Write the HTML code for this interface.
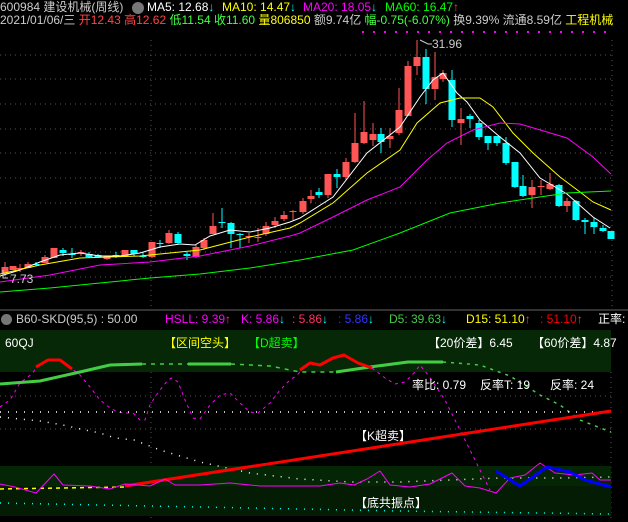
<!DOCTYPE html>
<html><head><meta charset="utf-8"><style>
html,body{margin:0;padding:0;background:#000;width:628px;height:522px;overflow:hidden}
svg{position:absolute;left:0;top:0}
.t{position:absolute;font-family:"Liberation Sans","Noto Sans CJK SC",sans-serif;font-size:12px;white-space:nowrap;line-height:14px}
</style></head><body>
<svg id="s" width="628" height="522" xmlns="http://www.w3.org/2000/svg">
<g stroke="#555" stroke-width="1" stroke-dasharray="1,4">
<line x1="0" y1="55" x2="612" y2="55"/><line x1="0" y1="79" x2="612" y2="79"/><line x1="0" y1="104" x2="612" y2="104"/><line x1="0" y1="129" x2="612" y2="129"/><line x1="0" y1="153" x2="612" y2="153"/><line x1="0" y1="178" x2="612" y2="178"/><line x1="0" y1="203" x2="612" y2="203"/><line x1="0" y1="227" x2="612" y2="227"/><line x1="0" y1="252" x2="612" y2="252"/><line x1="0" y1="277" x2="612" y2="277"/>
<line x1="151" y1="40" x2="151" y2="308"/><line x1="612" y1="40" x2="612" y2="308"/>
<line x1="0" y1="396" x2="612" y2="396"/><line x1="0" y1="429" x2="612" y2="429"/>
<line x1="151" y1="372" x2="151" y2="522"/><line x1="611" y1="372" x2="611" y2="522"/>
</g>
<line x1="0" y1="310" x2="628" y2="310" stroke="#666" stroke-width="1"/>
<line x1="362" y1="32" x2="612" y2="32" stroke="#f0f" stroke-width="2" stroke-dasharray="2,9"/>
<g id="c"></g>
<polyline fill="none" stroke="#fff" stroke-width="1" points="0,276 20,270 40,262 60,255 80,253 100,256 120,256 140,253 160,247 180,244 195,245 210,236 230,230 250,232 270,228 290,222 300,218 333,197 367,153 400,127 420,97 433,80 443,73 457,93 467,102 480,120 500,137 520,153 540,178 567,194 593,217 610,228"/>
<polyline fill="none" stroke="#ff0" stroke-width="1" points="0,274 40,265 80,258 140,256 200,250 250,237 290,228 300,223 333,203 367,173 400,150 417,123 440,103 460,98 480,98 493,107 513,133 533,153 560,177 580,192 593,202 611,210"/>
<polyline fill="none" stroke="#f0f" stroke-width="1" points="0,282 50,275 100,265 150,262 200,256 250,246 290,236 300,233 333,217 367,200 400,187 427,160 447,143 473,130 500,123 520,124 547,132 567,138 593,157 611,174"/>
<polyline fill="none" stroke="#0f0" stroke-width="1" points="0,292 50,288 100,283 150,278 200,274 250,268 300,260 353,250 400,233 450,213 500,203 533,198 567,193 611,191"/>
<polyline fill="none" stroke="#ccc" points="420,40 428,44 432,44"/>
<polyline fill="none" stroke="#ccc" points="3,270 3,278 8,278"/>
<!-- panel 2 -->
<rect x="0" y="330" width="611" height="42" fill="#062806"/>
<rect x="0" y="466" width="611" height="50" fill="#041c04"/>
<rect x="0" y="466" width="611" height="20" fill="#052605"/>
<g fill="none" stroke-linejoin="round">
<polyline stroke="#f0f" stroke-width="1" stroke-dasharray="3,4" points="0,407 10,400 20,383 33,373 36,367 48,360 60,360 72,369 80,375 90,387 100,400 110,408 118,412 125,413 133,413 140,420 145,420 150,405 155,397 160,390 168,380 172,378 178,382 185,400 193,418 200,419 210,405 220,395 230,393 240,403 250,412 258,413 270,403 280,390 290,380 296,376 300,372"/>
<polyline stroke="#f0f" stroke-width="1" stroke-dasharray="3,4" points="372,368 385,378 395,384 405,382 415,372 420,365 428,375 435,385 445,400 455,420 465,440 475,460 490,490"/>
<polyline stroke="#44cc44" stroke-width="3" points="0,384 40,381 80,372 110,365 142,364"/>
<polyline stroke="#44cc44" stroke-width="1.5" stroke-dasharray="4,5" points="142,364 188,364"/>
<polyline stroke="#44cc44" stroke-width="3" points="188,364 231,364"/>
<polyline stroke="#44cc44" stroke-width="1.5" stroke-dasharray="4,5" points="231,364 270,366 300,372 336,372"/>
<polyline stroke="#44cc44" stroke-width="3" points="336,372 370,367 408,362 443,362"/>
<polyline stroke="#44cc44" stroke-width="1.5" stroke-dasharray="3,5" points="443,362 480,365 510,376 540,395 560,405 580,420 611,432"/>
<polyline stroke="#f00" stroke-width="3" points="36,367 48,360 60,360 72,369"/>
<polyline stroke="#f00" stroke-width="3" points="300,370 310,363 320,365 333,358 344,355 358,363 372,368"/>
<polyline stroke="#fff" stroke-width="1.5" stroke-dasharray="1,7" points="0,412 611,412"/>
<polyline stroke="#fff" stroke-width="1.5" stroke-dasharray="1,7" points="0,417 20,419 40,421 63,425 80,429 100,433 115,438 134,440 160,450 200,462 250,473 300,479 350,482 400,482 450,480 500,478 560,478 611,477"/>
<polyline stroke="#0ff" stroke-width="1.5" stroke-dasharray="1,7" points="0,503 200,507 400,511 611,514"/>
<polyline stroke="#ff0" stroke-width="1.5" stroke-dasharray="4,4" points="0,489 125,487"/>
<polyline stroke="#f00" stroke-width="3" points="125,486 611,411"/>
<polyline stroke="#f0f" stroke-width="1" points="0,484 15,487 36,493 54,474 63,485 90,486 110,489 125,484 150,486 165,479 175,485 200,485 230,483 260,486 290,486 320,486 340,483 354,485 367,479 380,471 390,485 410,487 430,484 452,473 465,486 480,488 496,493 510,478 525,475 540,463 555,473 575,475 592,473 600,480 611,480"/>
<polyline stroke="#00f" stroke-width="3" points="496,471 520,486 547,467 570,472 585,480 611,487"/>
</g>
</svg>
<div class="t" style="left:0;top:1;color:#ccc">600984 建设机械(周线)</div>
<div style="position:absolute;left:132px;top:2px;width:12px;height:12px;border-radius:6px;background:#777"></div>
<div class="t" style="left:147px;top:1;color:#fff">MA5: 12.68<span style="color:#0ff">↓</span></div>
<div class="t" style="left:222px;top:1;color:#ff0">MA10: 14.47<span style="color:#0ff">↓</span></div>
<div class="t" style="left:303px;top:1;color:#f0f">MA20: 18.05<span style="color:#0ff">↓</span></div>
<div class="t" style="left:385px;top:1;color:#0f0">MA60: 16.47<span style="color:#f44">↑</span></div>
<div class="t" style="left:0;top:13px;color:#ccc">2021/01/06/三 <span style="color:#f44">开12.43</span> <span style="color:#f44">高12.62</span> <span style="color:#4f4">低11.54</span> <span style="color:#4f4">收11.60</span> <span style="color:#ff0">量806850</span> 额9.74亿 <span style="color:#4f4">幅-0.75(-6.07%)</span> 换9.39% 流通8.59亿 <span style="color:#ff0">工程机械</span></div>
<div class="t" style="left:432px;top:37px;color:#ccc">31.96</div>
<div class="t" style="left:10px;top:272px;color:#ccc">7.73</div>
<div style="position:absolute;left:1px;top:314px;width:11px;height:11px;border-radius:6px;background:#777"></div>
<div class="t" style="left:16px;top:312px;color:#ccc">B60-SKD(95,5) : 50.00</div>
<div class="t" style="left:165px;top:312px;color:#f0f">HSLL: 9.39<span style="color:#f44">↑</span></div>
<div class="t" style="left:241px;top:312px;color:#f0f">K: 5.86<span style="color:#0ff">↓</span></div>
<div class="t" style="left:292px;top:312px;color:#f36">: 5.86<span style="color:#0ff">↓</span></div>
<div class="t" style="left:338px;top:312px;color:#33f">: 5.86<span style="color:#0ff">↓</span></div>
<div class="t" style="left:389px;top:312px;color:#4c4">D5: 39.63<span style="color:#0ff">↓</span></div>
<div class="t" style="left:466px;top:312px;color:#ff0">D15: 51.10<span style="color:#f44">↑</span></div>
<div class="t" style="left:540px;top:312px;color:#f00">: 51.10<span style="color:#f44">↑</span></div>
<div class="t" style="left:598px;top:312px;color:#fff">正率:</div>
<div class="t" style="left:5px;top:336px;color:#fff">60QJ</div>
<div class="t" style="left:164px;top:336px;color:#ff0">【区间空头】</div>
<div class="t" style="left:248px;top:336px;color:#0f0">【D超卖】</div>
<div class="t" style="left:428px;top:336px;color:#fff">【20价差】6.45</div>
<div class="t" style="left:532px;top:336px;color:#fff">【60价差】4.87</div>
<div class="t" style="left:412px;top:378px;color:#fff">率比: 0.79</div>
<div class="t" style="left:480px;top:378px;color:#fff">反率T: 19</div>
<div class="t" style="left:550px;top:378px;color:#fff">反率: 24</div>
<div class="t" style="left:355px;top:429px;color:#fff">【K超卖】</div>
<div class="t" style="left:355px;top:496px;color:#fff">【底共振点】</div>
<script>
var R="#ff5555",C="#00ffff";
// [x, bodyTop, bodyBot, wickTop, wickBot, color]
var d=[[5,267,274,262,276,R],[13,266,270,266,270,R],[20,268,269,264,272,R],[28,264,268,262,268,R],[36,264,265,262,266,C],[45,257,263,255,263,R],[54,248,258,248,258,R],[63,250,253,248,256,C],[72,254,255,248,258,C],[81,252,253,250,256,R],[89,254,257,252,258,C],[98,255,257,254,258,C],[107,256,259,256,260,R],[116,255,256,252,258,C],[125,250,256,250,257,R],[134,250,254,250,256,C],[143,256,257,252,258,C],[152,242,257,242,258,R],[160,243,244,240,248,C],[169,233,243,230,244,R],[178,234,243,232,244,C],[187,254,256,252,260,C],[196,247,257,245,258,R],[204,240,248,238,250,R],[213,226,234,213,234,R],[222,222,223,208,228,C],[231,223,234,222,248,C],[240,234,235,233,248,C],[249,236,237,233,243,R],[258,237,238,228,242,R],[266,226,234,222,236,R],[275,221,225,217,228,R],[284,215,219,211,221,R],[293,211,212,210,220,R],
[303,201,212,198,214,R],[311,196,199,190,203,R],[319,192,195,188,198,C],[328,174,195,174,198,R],[337,174,177,169,188,C],[346,162,177,158,180,R],[355,143,162,113,163,R],[364,132,143,101,144,R],[373,134,140,123,146,R],[381,134,142,128,153,C],[390,136,139,128,148,R],[399,110,133,88,135,R],[408,66,116,61,116,R],[417,57,66,40,75,R],[426,57,89,49,104,C],[435,77,89,52,100,R],[443,73,79,70,82,R],[452,80,120,70,127,C],[461,119,123,108,145,R],[470,116,119,114,128,C],[479,123,137,120,140,C],[488,136,143,136,150,C],[497,136,143,136,146,C],[506,143,163,137,165,C],[515,162,187,162,188,C],[523,186,196,175,197,C],[532,187,195,180,208,R],[541,186,187,180,195,R],[550,184,189,173,190,R],[559,185,206,184,207,C],[567,201,206,198,212,R],[576,201,220,200,221,C],[585,220,222,218,234,C],[594,222,227,218,234,C],[603,228,231,225,232,C],[611,231,239,231,239,C]];
var g=document.getElementById("c"),h="";
d.forEach(function(a){var x=a[0];
h+='<line x1="'+x+'" y1="'+a[3]+'" x2="'+x+'" y2="'+a[4]+'" stroke="'+a[5]+'" stroke-width="1"/>';
var bh=Math.max(1,a[2]-a[1]);
h+='<rect x="'+(x-3.5)+'" y="'+a[1]+'" width="7" height="'+bh+'" fill="'+a[5]+'"/>';});
g.innerHTML=h;
</script>
</body></html>
